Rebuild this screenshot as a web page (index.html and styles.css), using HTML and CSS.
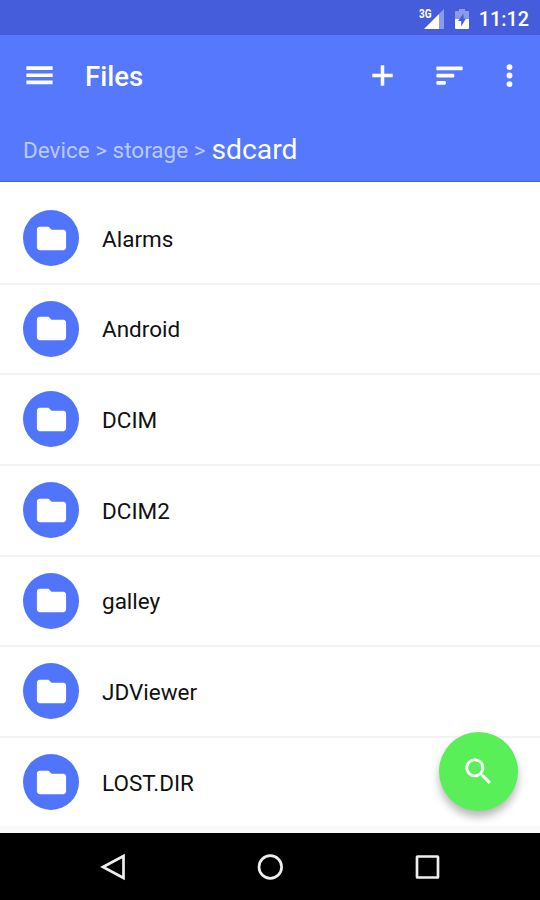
FILE: index.html
```html
<!DOCTYPE html>
<html lang="en">
<head>
    <meta charset="UTF-8">
    <meta name="viewport" content="width=device-width, initial-scale=1.0">
    <title>Files</title>
    <link rel="stylesheet" href="styles.css">
</head>
<body>
    <svg class="symbols">
        <symbol id="folder" viewBox="0 0 24 24">
            <path d="M10 4H4c-1.1 0-2 .9-2 2v12c0 1.100.9 2 2 2h16c1.100 0 2-.9 2-2V8c0-1.100-.9-2-2-2h-8z"/>
        </symbol>
    </svg>
    <div class="screen">
        <div class="status-bar">
            <svg class="signal" width="28" height="24" viewBox="0 0 28 24">
                <path d="M20 8L25 3v20H20z" fill="#8b9beb"/>
                <path d="M5 23L20 8v15z" fill="#fff"/>
                <text x="0" y="12" textLength="12.500" lengthAdjust="spacingAndGlyphs">3G</text>
            </svg>
            <svg class="battery" width="16" height="24" viewBox="0 0 16 24">
                <path d="M1 13V6q0-1 1-1h3V3h6v2h3q1 0 1 1v7z" fill="#8b9beb"/>
                <path d="M1 13h14v9q0 1-1 1H2q-1 0-1-1z" fill="#fff"/>
                <path d="M9.500 7.500L4 15h3.200v5.500L12 12.500H9.500z" fill="#465ddb"/>
            </svg>
            <span class="clock">11:12</span>
        </div>
        <div class="header">
            <div class="toolbar">
                <svg class="icon menu" viewBox="0 0 24 24"><path d="M3 18h18v-2.500H3zM3 13.100h18v-2.500H3zM3 5.700v2.500h18V5.700z"/></svg>
                <h1>Files</h1>
                <svg class="icon add" viewBox="0 0 24 24"><path d="M19 13.200h-5.800V19h-2.400v-5.800H5v-2.400h5.800V5h2.400v5.800H19z"/></svg>
                <svg class="icon sort" viewBox="0 0 24 24">
                    <rect x="3" y="5.800" width="18" height="2.600" rx=".5"/>
                    <rect x="3" y="10.800" width="12.300" height="2.600" rx=".9"/>
                    <rect x="3" y="15.700" width="6.500" height="2.600" rx=".9"/>
                </svg>
                <svg class="icon more" viewBox="0 0 24 24">
                    <circle cx="12" cy="6.200" r="2"/>
                    <circle cx="12" cy="12" r="2"/>
                    <circle cx="12" cy="17.900" r="2"/>
                </svg>
            </div>
            <div class="path">
                <span>Device &gt; storage &gt;</span>
                <span class="current">sdcard</span>
            </div>
        </div>
        <ul class="files">
            <li><span class="avatar"><svg class="icon"><use href="#folder"/></svg></span><span class="name">Alarms</span></li>
            <li><span class="avatar"><svg class="icon"><use href="#folder"/></svg></span><span class="name">Android</span></li>
            <li><span class="avatar"><svg class="icon"><use href="#folder"/></svg></span><span class="name">DCIM</span></li>
            <li><span class="avatar"><svg class="icon"><use href="#folder"/></svg></span><span class="name">DCIM2</span></li>
            <li><span class="avatar"><svg class="icon"><use href="#folder"/></svg></span><span class="name">galley</span></li>
            <li><span class="avatar"><svg class="icon"><use href="#folder"/></svg></span><span class="name">JDViewer</span></li>
            <li><span class="avatar"><svg class="icon"><use href="#folder"/></svg></span><span class="name">LOST.DIR</span></li>
        </ul>
        <div class="fab">
            <svg class="icon" viewBox="0 0 24 24"><path d="M15.500 14h-.79l-.28-.27C15.410 12.590 16 11.110 16 9.500 16 5.910 13.090 3 9.500 3S3 5.910 3 9.500 5.910 16 9.500 16c1.610 0 3.090-.59 4.230-1.570l.27.28v.79l5 4.990L20.490 19l-4.990-5zm-6 0C7.010 14 5 11.990 5 9.500S7.010 5 9.500 5 14 7.010 14 9.500 11.990 14 9.500 14z"/></svg>
        </div>
        <div class="nav-bar">
            <svg width="28" height="28" viewBox="0 0 28 28"><path d="M4 14L24.500 3v22z"/></svg>
            <svg width="28" height="28" viewBox="0 0 28 28"><circle cx="14.300" cy="14" r="11.300"/></svg>
            <svg width="28" height="28" viewBox="0 0 28 28"><rect x="4" y="3.500" width="21" height="21" rx=".5"/></svg>
        </div>
    </div>
</body>
</html>
```

FILE: styles.css
```css
* {
    box-sizing: border-box;
}
body {
    margin: 0;
    font-family: Roboto, sans-serif;
    background-color: #fff;
}
.symbols {
    display: none;
}
.screen {
    position: relative;
    display: flex;
    flex-direction: column;
    width: 540px;
    height: 900px;
    overflow: hidden;
}
.icon {
    display: block;
    flex: none;
    width: 35px;
    height: 35px;
    fill: #fff;
}
.status-bar {
    display: flex;
    flex: none;
    align-items: center;
    justify-content: flex-end;
    height: 35px;
    padding-right: 11px;
    color: #fff;
    background-color: #465ddb;
}
.signal {
    margin-right: 7px;
}
.signal text {
    font-size: 12px;
    font-weight: 700;
    fill: #fff;
}
.battery {
    margin-right: 9px;
}
.clock {
    padding-top: 4px;
    font-size: 19.8px;
    font-weight: 500;
    line-height: 24px;
}
.header {
    flex: none;
    height: 147px;
    color: #fff;
    background-color: #5578fc;
    border-bottom: 1px solid #4061e4;
}
.toolbar {
    display: flex;
    align-items: center;
    height: 80px;
    padding: 0 13.5px 0 22px;
}
.toolbar h1 {
    flex: 1;
    margin: 4px 0 0 28px;
    font-size: 27.5px;
    font-weight: 500;
    line-height: 32px;
}
.sort {
    margin-left: 32px;
}
.more {
    margin-left: 24.5px;
}
.path {
    display: flex;
    align-items: center;
    gap: 6px;
    padding: 17px 0 0 23px;
    font-size: 22.5px;
    line-height: 34px;
    color: #bbc9fe;
}
.current {
    padding-top: 1px;
    font-size: 28.3px;
    color: #fff;
}
.files {
    flex: none;
    margin: 0;
    padding: 12px 0 0;
    list-style: none;
    background-color: #fff;
    border-bottom: 7px solid #f9f9f9;
}
.files li {
    display: flex;
    align-items: center;
    padding: 16px 23px 16.7px;
    border-bottom: 2px solid #f3f3f3;
}
.files li:last-child {
    padding-bottom: 15.8px;
    border-bottom: none;
}
.avatar {
    display: flex;
    align-items: center;
    justify-content: center;
    width: 56px;
    height: 56px;
    border-radius: 50%;
    background-color: #5075fa;
}
.name {
    margin: 1px 0 0 23px;
    font-size: 22.5px;
    color: #111;
}
.fab {
    position: absolute;
    right: 22px;
    bottom: 89px;
    display: flex;
    align-items: center;
    justify-content: center;
    width: 79px;
    height: 79px;
    border-radius: 50%;
    background-color: #59ef59;
    box-shadow: 0 6px 8px rgba(0, 0, 0, 0.28);
}
.nav-bar {
    display: flex;
    flex: none;
    align-items: center;
    justify-content: center;
    gap: 129px;
    height: 67px;
    padding-top: 1px;
    background-color: #000;
}
.nav-bar svg {
    fill: none;
    stroke: #eee;
    stroke-width: 2.7;
}
```
